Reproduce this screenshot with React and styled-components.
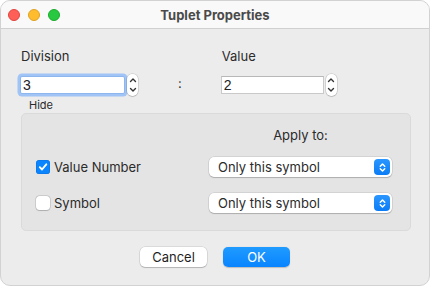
import React, { useState } from "react";
import styled, { createGlobalStyle } from "styled-components";

const GlobalStyle = createGlobalStyle`
  html, body {
    margin: 0;
    padding: 0;
    background: #ffffff;
  }
  body {
    font-family: Inter, "Liberation Sans", sans-serif;
    -webkit-font-smoothing: antialiased;
  }
`;

const ChevronUpDown = ({ color = "#444", size = 10 }) => (
  <svg width={size} height={size + 4} viewBox="0 0 10 14">
    <g
      stroke={color}
      strokeWidth="1.6"
      fill="none"
      strokeLinecap="round"
      strokeLinejoin="round"
    >
      <path d="M2.5 5.5L5 3l2.5 2.5" />
      <path d="M2.5 8.5L5 11l2.5-2.5" />
    </g>
  </svg>
);

const Stepper = () => (
  <StepperBox>
    <svg width="8" height="6" viewBox="0 0 8 6">
      <path
        d="M1.5 4.5L4 2l2.5 2.5"
        stroke="#333"
        strokeWidth="1.4"
        fill="none"
        strokeLinecap="round"
        strokeLinejoin="round"
      />
    </svg>
    <svg width="8" height="6" viewBox="0 0 8 6">
      <path
        d="M1.5 1.5L4 4l2.5-2.5"
        stroke="#333"
        strokeWidth="1.4"
        fill="none"
        strokeLinecap="round"
        strokeLinejoin="round"
      />
    </svg>
  </StepperBox>
);

const Check = () => (
  <svg width="10" height="10" viewBox="0 0 10 10">
    <path
      d="M1.8 5.2l2.2 2.3 4.3-5.2"
      stroke="#fff"
      strokeWidth="1.9"
      fill="none"
      strokeLinecap="round"
      strokeLinejoin="round"
    />
  </svg>
);

const Popup = ({ value }) => (
  <PopupBox>
    <span>{value}</span>
    <PopupArrow>
      <ChevronUpDown color="#fff" size={9} />
    </PopupArrow>
  </PopupBox>
);

const App = () => {
  const [showValue, setShowValue] = useState(true);
  const [showSymbol, setShowSymbol] = useState(false);

  return (
    <Window>
      <GlobalStyle />
      <TitleBar>
        <Lights>
          <Light color="#fe5f57" border="#e0443e" />
          <Light color="#febc2e" border="#dea123" />
          <Light color="#28c840" border="#1aab29" />
        </Lights>
        <Title>Tuplet Properties</Title>
      </TitleBar>

      <Content>
        <TopRow>
          <Field>
            <Label>Division</Label>
            <InputRow>
              <NumberInput focused defaultValue="3" width={105} />
              <Stepper />
            </InputRow>
          </Field>
          <Colon>:</Colon>
          <Field>
            <Label>Value</Label>
            <InputRow>
              <NumberInput defaultValue="2" width={103} />
              <Stepper />
            </InputRow>
          </Field>
        </TopRow>

        <HideLabel>Hide</HideLabel>
        <GroupBox>
          <span />
          <ApplyLabel>Apply to:</ApplyLabel>

          <CheckRow onClick={() => setShowValue(!showValue)}>
            <CheckBox checked={showValue}>{showValue && <Check />}</CheckBox>
            Value Number
          </CheckRow>
          <Popup value="Only this symbol" />

          <CheckRow onClick={() => setShowSymbol(!showSymbol)}>
            <CheckBox checked={showSymbol}>{showSymbol && <Check />}</CheckBox>
            Symbol
          </CheckRow>
          <Popup value="Only this symbol" />
        </GroupBox>

        <Buttons>
          <Button>Cancel</Button>
          <Button primary>OK</Button>
        </Buttons>
      </Content>
    </Window>
  );
};

const Window = styled.div`
  width: 430px;
  height: 286px;
  box-sizing: border-box;
  border-radius: 10px;
  border: 1px solid #d2d2d2;
  background: #ececec;
  overflow: hidden;
  display: flex;
  flex-direction: column;
`;

const TitleBar = styled.div`
  height: 28px;
  flex-shrink: 0;
  box-sizing: border-box;
  background: #f9f9f9;
  border-bottom: 1px solid #d0d0d0;
  display: flex;
  align-items: center;
  position: relative;
`;

const Lights = styled.div`
  display: flex;
  gap: 8px;
  padding-left: 7px;
`;

const Light = styled.span`
  width: 12px;
  height: 12px;
  box-sizing: border-box;
  border-radius: 50%;
  background: ${(p) => p.color};
  border: 0.5px solid ${(p) => p.border};
`;

const Title = styled.div`
  position: absolute;
  left: 0;
  right: 0;
  text-align: center;
  font-size: 13px;
  font-weight: 700;
  color: #4a4a4a;
  pointer-events: none;
`;

const Content = styled.div`
  flex: 1;
  padding: 19px 19px 0 19px;
  display: flex;
  flex-direction: column;
`;

const TopRow = styled.div`
  display: flex;
  align-items: flex-start;
`;

const Field = styled.div`
  display: flex;
  flex-direction: column;
  gap: 10px;
`;

const Label = styled.div`
  font-size: 13px;
  line-height: 16px;
  color: #2b2b2b;
  padding-left: 1px;
`;

const InputRow = styled.div`
  display: flex;
  align-items: center;
  gap: 2px;
`;

const NumberInput = styled.input`
  width: ${(p) => p.width}px;
  height: 18px;
  box-sizing: border-box;
  border: 1px solid ${(p) => (p.focused ? "#8db6ee" : "#c9c9c9")};
  border-top-color: ${(p) => (p.focused ? "#8db6ee" : "#b8b8b8")};
  background: #fff;
  font-family: "Liberation Sans", Inter, sans-serif;
  font-size: 14px;
  color: #222;
  padding: 0 2px;
  outline: none;
  box-shadow: ${(p) => (p.focused ? "0 0 0 2.5px #9fc4f5" : "none")};
  border-radius: ${(p) => (p.focused ? "2px" : "0")};
`;

const StepperBox = styled.div`
  width: 11px;
  height: 22px;
  box-sizing: border-box;
  border-radius: 5px;
  background: #fff;
  box-shadow: 0 0 0 0.5px rgba(0, 0, 0, 0.18), 0 0.5px 1px rgba(0, 0, 0, 0.2);
  display: flex;
  flex-direction: column;
  align-items: center;
  justify-content: space-evenly;
`;

const Colon = styled.div`
  font-size: 13px;
  color: #333;
  margin: 27px 39px 0 40px;
`;

const HideLabel = styled.div`
  font-size: 11px;
  line-height: 13px;
  color: #2b2b2b;
  margin: 3px 0 1px 9px;
`;

const GroupBox = styled.div`
  margin-left: 1px;
  width: 390px;
  height: 118px;
  box-sizing: border-box;
  background: #e4e4e4;
  border: 1px solid #dadada;
  border-radius: 5px;
  padding: 15px 18px 0 14px;
  display: grid;
  grid-template-columns: 1fr 183px;
  grid-template-rows: 16px 20px 20px;
  row-gap: 16px;
  align-items: center;
`;

const ApplyLabel = styled.div`
  font-size: 13px;
  line-height: 16px;
  color: #2b2b2b;
  text-align: center;
  transform: translateY(-2px);
`;

const CheckRow = styled.label`
  display: flex;
  align-items: center;
  gap: 4px;
  font-size: 13px;
  color: #2b2b2b;
  cursor: default;
  transform: translateY(-4px);
`;

const CheckBox = styled.span`
  width: 14px;
  height: 14px;
  box-sizing: border-box;
  border-radius: 3.5px;
  display: flex;
  align-items: center;
  justify-content: center;
  background: ${(p) => (p.checked ? "#0a84ff" : "#fff")};
  box-shadow: ${(p) =>
    p.checked
      ? "inset 0 0 0 0.5px #0872db"
      : "0 0 0 0.5px rgba(0,0,0,0.2), 0 0.5px 1px rgba(0,0,0,0.15)"};
`;

const PopupBox = styled.div`
  height: 20px;
  box-sizing: border-box;
  background: #fff;
  border-radius: 5px;
  box-shadow: 0 0 0 0.5px rgba(0, 0, 0, 0.14), 0 1px 1px rgba(0, 0, 0, 0.18);
  display: flex;
  align-items: center;
  justify-content: space-between;
  padding: 0 2px 0 9px;
  font-size: 13px;
  color: #2b2b2b;
  transform: translateY(-4px);
`;

const PopupArrow = styled.span`
  width: 16px;
  height: 16px;
  border-radius: 4px;
  background: linear-gradient(#2a96ff, #0a7cf5);
  display: flex;
  align-items: center;
  justify-content: center;
`;

const Buttons = styled.div`
  display: flex;
  justify-content: center;
  gap: 16px;
  margin-top: 16px;
`;

const Button = styled.button`
  width: 67px;
  height: 20px;
  border: none;
  border-radius: 5px;
  font-family: Inter, "Liberation Sans", sans-serif;
  font-size: 13px;
  padding: 0;
  color: ${(p) => (p.primary ? "#fff" : "#1f1f1f")};
  background: ${(p) =>
    p.primary ? "linear-gradient(#1f9bff, #0a84ff)" : "#ffffff"};
  box-shadow: ${(p) =>
    p.primary
      ? "0 0.5px 1px rgba(0,0,0,0.2)"
      : "0 0 0 0.5px rgba(0,0,0,0.15), 0 1px 1px rgba(0,0,0,0.18)"};
`;

export default App;
